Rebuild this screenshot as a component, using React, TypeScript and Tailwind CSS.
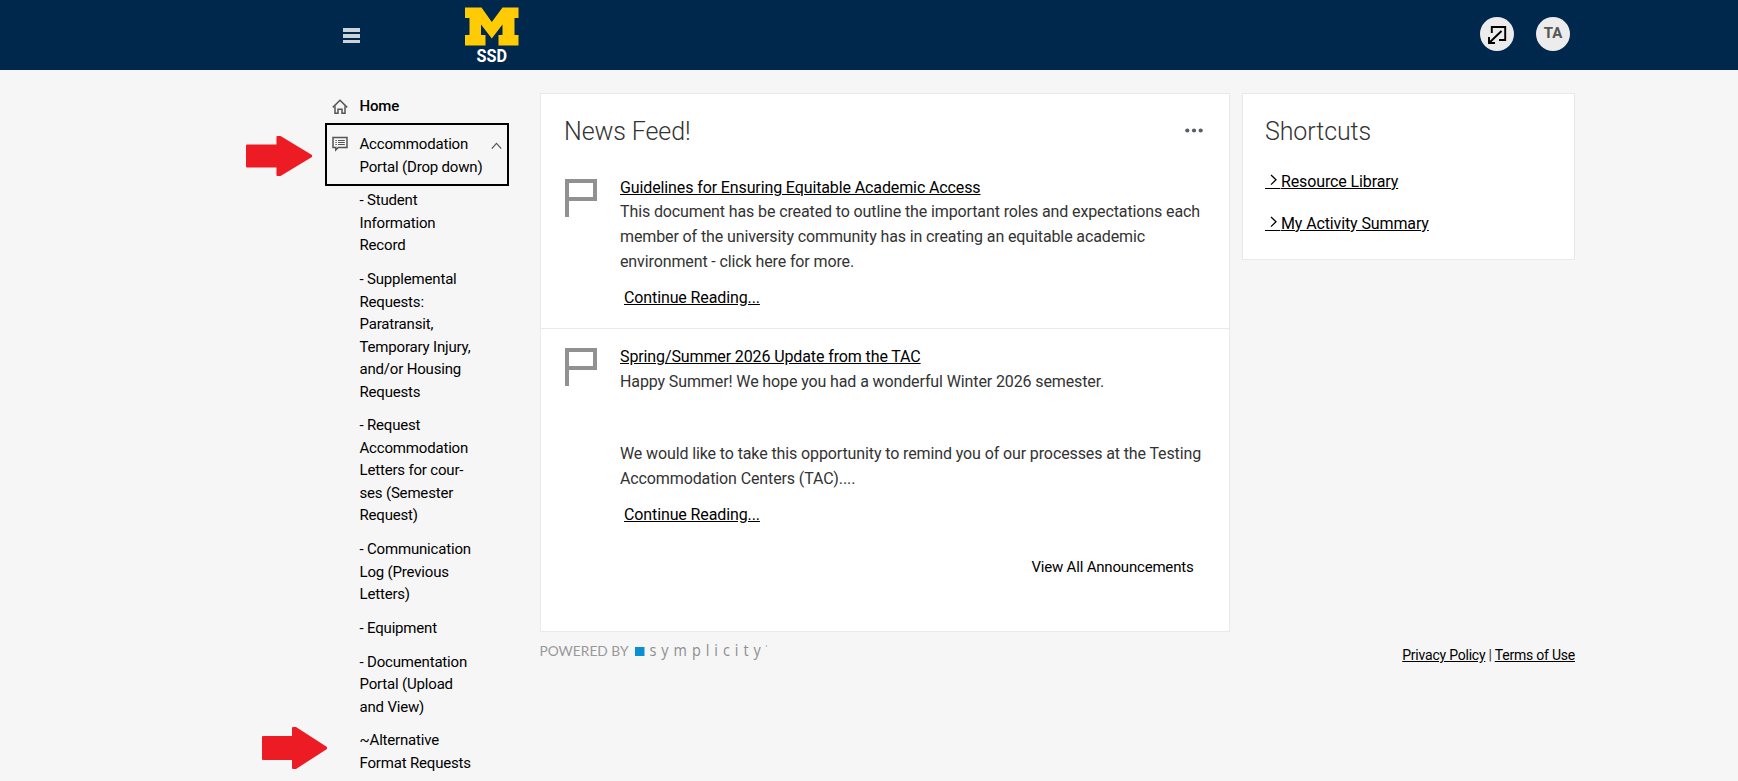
import type { ReactNode } from "react";

type SubItem = {
  id: string;
  lines: string[];
};

const subItems: SubItem[] = [
  { id: "record", lines: ["- Student", "Information", "Record"] },
  {
    id: "supplemental",
    lines: [
      "- Supplemental",
      "Requests:",
      "Paratransit,",
      "Temporary Injury,",
      "and/or Housing",
      "Requests",
    ],
  },
  {
    id: "letters",
    lines: ["- Request", "Accommodation", "Letters for cour-", "ses (Semester", "Request)"],
  },
  { id: "log", lines: ["- Communication", "Log (Previous", "Letters)"] },
  { id: "equipment", lines: ["- Equipment"] },
  { id: "docs", lines: ["- Documentation", "Portal (Upload", "and View)"] },
  { id: "alt", lines: ["~Alternative", "Format Requests"] },
];

const shortcuts = ["Resource Library", "My Activity Summary"];

function Logo() {
  return (
    <svg width="56" height="60" viewBox="0 0 56 60" className="block">
      <path
        d="M1 1.5H17.5L27.8 16L38.5 1.5H54.5V12H50.5V29H54.5V39.5H34.5V29H38.5V18.5L27.8 32.5L17 18.5V29H21.5V39.5H1V29H5.5V12H1Z"
        fill="#ffcb05"
      />
      <text
        x="12.5"
        y="56.3"
        textLength="30.5"
        lengthAdjust="spacingAndGlyphs"
        fill="#fff"
        fontFamily="Roboto"
        fontWeight="700"
        fontSize="19"
      >
        SSD
      </text>
    </svg>
  );
}

function Header() {
  return (
    <header className="flex h-[70px] bg-[#00274c]">
      <button className="ml-[343px] mt-7 flex h-[15px] w-[17px] flex-col justify-between">
        <span className="h-[4px] w-full bg-[#ccd4db]" />
        <span className="h-[4px] w-full bg-[#ccd4db]" />
        <span className="h-[3px] w-full bg-[#ccd4db]" />
      </button>
      <div className="ml-[104px] mt-1.5">
        <Logo />
      </div>
      <div className="ml-auto mr-[168px] mt-[17px] flex gap-[22px]">
        <button className="h-[34px] w-[34px] rounded-full bg-[#ececec]">
          <svg width="34" height="34" viewBox="0 0 34 34" fill="none" stroke="#000" strokeWidth="1.9">
            <path d="M11.8 16V10H25.2V23H19" />
            <path d="M21.5 14L9 26M9 20V26H15" />
          </svg>
        </button>
        <button className="h-[34px] w-[34px] rounded-full bg-[#ececec] pb-0.5 text-[15px] font-bold text-[#555]">
          TA
        </button>
      </div>
    </header>
  );
}

function HomeIcon() {
  return (
    <svg width="16" height="16" viewBox="0 0 16 16" fill="none" stroke="#555" strokeWidth="1.5">
      <path d="M0.8 8.4L8 1.3L15.2 8.4" />
      <path d="M3 7.2V14.3H6V10.2H10V14.3H13V7.2" />
    </svg>
  );
}

function PortalIcon() {
  return (
    <svg width="16" height="16" viewBox="0 0 16 16" fill="none" stroke="#555" strokeWidth="1.5">
      <path d="M1 1.5H15V11.5H6.2L3.8 14V11.5H1Z" />
      <path d="M3.4 4.5H4.8M6 4.5H12.8M3.4 6.5H4.8M6 6.5H12.8M3.4 8.5H4.8M6 8.5H12.8" strokeWidth="1" />
    </svg>
  );
}

function Sidebar() {
  return (
    <nav className="w-[184px] shrink-0 text-[15px] leading-[22.5px] tracking-[-0.18px] text-black">
      <div className="flex h-[30px] pt-[1.5px]">
        <span className="ml-[7px] mt-[4px]">
          <HomeIcon />
        </span>
        <span className="ml-[11.5px] font-medium">Home</span>
      </div>
      <div className="flex h-[63px] border-2 border-black pt-[8px]">
        <span className="ml-[5px] mt-[2.5px]">
          <PortalIcon />
        </span>
        <span className="ml-[11.5px] whitespace-nowrap">
          Accommodation
          <br />
          Portal (Drop down)
        </span>
        <svg className="ml-auto mr-[5px] mt-[9px]" width="11" height="8" viewBox="0 0 11 8" fill="none" stroke="#555" strokeWidth="1.2">
          <path d="M0.8 6.6L5.5 1.4L10.2 6.6" />
        </svg>
      </div>
      <ul className="ml-[34.5px] mt-[3.25px] flex flex-col gap-[11.25px] whitespace-nowrap">
        {subItems.map((item) => (
          <li key={item.id}>
            {item.lines.map((line) => (
              <div key={line}>{line}</div>
            ))}
          </li>
        ))}
      </ul>
    </nav>
  );
}

function Article({ title, children }: { title: string; children: ReactNode }) {
  return (
    <article className="flex">
      <svg className="ml-[23px] mt-[3px] shrink-0" width="34" height="39" viewBox="0 0 34 39" fill="none" stroke="#919191" strokeWidth="4">
        <path d="M3 39V3H31V21H3" />
      </svg>
      <div className="ml-[22px] whitespace-nowrap text-base leading-[25px] tracking-[-0.115px] text-[#333]">
        <a className="block text-black underline">{title}</a>
        {children}
        <a className="ml-1 mt-[11px] block text-black underline">Continue Reading...</a>
      </div>
    </article>
  );
}

function NewsFeed() {
  return (
    <section className="h-[539px] w-[690px] shrink-0 border border-[#e9e9e9] bg-white">
      <div className="flex items-center justify-between pl-[23px] pr-[26px] pt-[22px]">
        <h2 className="text-[25px] font-light leading-8 tracking-[-0.1px] text-[#333]">News Feed!</h2>
        <svg width="18" height="5" viewBox="0 0 18 5" fill="#5a5f66" className="-mt-[4px]">
          <circle cx="2.3" cy="2.5" r="2.1" />
          <circle cx="9" cy="2.5" r="2.1" />
          <circle cx="15.7" cy="2.5" r="2.1" />
        </svg>
      </div>
      <div className="h-[181px] border-b border-[#e9e9e9] pt-[27px]">
        <Article title="Guidelines for Ensuring Equitable Academic Access">
          <p className="-mt-px">
            This document has be created to outline the important roles and expectations each
            <br />
            member of the university community has in creating an equitable academic
            <br />
            environment - click here for more.
          </p>
        </Article>
      </div>
      <div className="pt-[15px]">
        <Article title="Spring/Summer 2026 Update from the TAC">
          <p>Happy Summer! We hope you had a wonderful Winter 2026 semester.</p>
          <p className="mt-[47px]">
            We would like to take this opportunity to remind you of our processes at the Testing
            <br />
            Accommodation Centers (TAC)....
          </p>
        </Article>
      </div>
      <div className="mr-[35.5px] mt-[29px] text-right text-[15px] leading-[22px] tracking-[-0.19px] text-black">
        View All Announcements
      </div>
    </section>
  );
}

function Shortcuts() {
  return (
    <section className="ml-[12px] h-[167px] w-[333px] shrink-0 border border-[#e9e9e9] bg-white pl-[22px] pt-[22px]">
      <h2 className="text-[25px] font-light leading-8 tracking-[-0.1px] text-[#333]">Shortcuts</h2>
      <ul className="mt-[21px] flex flex-col gap-[17px] text-base leading-[25px] tracking-[-0.12px] text-black">
        {shortcuts.map((label) => (
          <li key={label} className="flex">
            <span className="relative w-4 whitespace-pre underline">
              {"    "}
              <svg className="absolute left-[5px] top-[5px]" width="8" height="12" viewBox="0 0 8 12" fill="none" stroke="#000" strokeWidth="1.3">
                <path d="M1 1L6 5.8L1 10.6" />
              </svg>
            </span>
            <span className="underline">{label}</span>
          </li>
        ))}
      </ul>
    </section>
  );
}

function Footer() {
  return (
    <footer className="flex justify-between">
      <svg className="mt-[11px] overflow-visible" width="230" height="24" viewBox="0 0 230 24">
        <text x="-0.5" y="13" textLength="89" lengthAdjust="spacingAndGlyphs" fontFamily="Lato" fontSize="12.5" fill="#999">
          POWERED BY
        </text>
        <rect x="95" y="4" width="9.5" height="9" fill="#0a8fd4" />
        <text
          transform="translate(109.5 13) scale(0.85 1)"
          letterSpacing="6"
          textLength="137"
          fontFamily="Open Sans"
          fontSize="17"
          fill="#8e8e8e"
        >
          symplicity
        </text>
        <circle cx="226.5" cy="3" r="0.8" fill="#aaa" />
      </svg>
      <div className="mt-[13px] text-sm leading-[21px] tracking-[-0.22px] text-[#333]">
        <a className="text-black underline">Privacy Policy</a> | <a className="text-black underline">Terms of Use</a>
      </div>
    </footer>
  );
}

function Arrow({ className }: { className: string }) {
  return (
    <svg className={className} width="66" height="42" viewBox="0 0 66 42" preserveAspectRatio="none">
      <path
        d="M1 9.5H30V2Q30 1 31 1H34L65 20V22L34 41H31Q30 41 30 40V32.5H1Q0 32.5 0 31.5V10.5Q0 9.5 1 9.5Z"
        fill="#ed1c24"
      />
    </svg>
  );
}

export default function App() {
  return (
    <div className="relative h-[781px] w-[1738px] overflow-hidden bg-[#f6f6f6] font-['Roboto',sans-serif]">
      <Header />
      <div className="ml-[325px] flex pt-[23px]">
        <Sidebar />
        <main className="ml-[31px] w-[1035px] shrink-0">
          <div className="flex items-start">
            <NewsFeed />
            <Shortcuts />
          </div>
          <Footer />
        </main>
      </div>
      {/* pointers laid over the menu */}
      <Arrow className="absolute left-[246px] top-[135px] w-[67px]" />
      <Arrow className="absolute left-[262px] top-[726px] h-[44px]" />
    </div>
  );
}
